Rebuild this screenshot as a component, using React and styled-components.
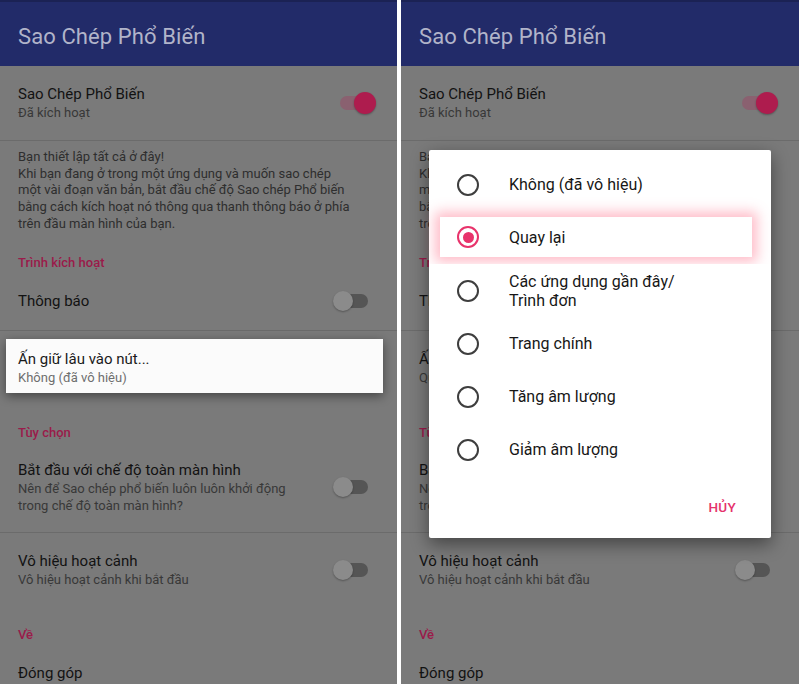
import React from "react";
import styled, { createGlobalStyle } from "styled-components";

// ===== GLOBAL =====
const GlobalStyle = createGlobalStyle`
    body {
        margin: 0;
        background: #ffffff;
        font-family: Roboto, "Noto Sans", "Liberation Sans", sans-serif;
    }
`;

// ===== STYLED COMPONENTS =====
const Stage = styled.div`
    display: flex;
    gap: 4px;
    width: 799px;
    height: 684px;
    overflow: hidden;
    background: #ffffff;
`;

const Screen = styled.div`
    position: relative;
    flex: 0 0 ${props => props.$width}px;
    display: flex;
    flex-direction: column;
    background: #7a7a7a;
    overflow: hidden;
`;

const AppBar = styled.div`
    flex: 0 0 66px;
    display: flex;
    align-items: center;
    padding: 4px 18px 0;
    box-sizing: border-box;
    background: #222b69;
    border-top: 2px solid #1b2254;
`;

const AppTitle = styled.div`
    font-size: 22px;
    color: #b1b4c9;
    letter-spacing: 0.1px;
`;

const Row = styled.div`
    display: flex;
    align-items: center;
    gap: 18px;
    padding: ${props => props.$pt}px 22px ${props => props.$pb}px 18px;
    border-bottom: ${props => props.$divider ? "1px solid #6b6b6b" : "none"};
`;

const RowText = styled.div`
    flex: 1;
    min-width: 0;
`;

const RowTitle = styled.div`
    font-size: 15px;
    line-height: 20px;
    color: #121212;
`;

const RowSummary = styled.div`
    font-size: 13px;
    line-height: 17px;
    color: #383838;
`;

const Note = styled.p`
    margin: 0;
    padding: 8px 18px 8.5px;
    font-size: 13px;
    line-height: 16.7px;
    color: #2e2e2e;
    white-space: nowrap;
`;

const SectionTitle = styled.div`
    padding: ${props => props.$pt}px 18px 0;
    font-size: 13px;
    line-height: 16px;
    font-weight: 500;
    color: #9a1b4a;
`;

const PressSlot = styled.div`
    position: relative;
    z-index: 2;
    padding: 8px 14px 13px 6px;
`;

const PressCard = styled.div`
    padding: 10px 12px 7px;
    background: ${props => props.$raised ? "#fbfbfb" : "transparent"};
    box-shadow: ${props => props.$raised ? "0 3px 10px rgba(0, 0, 0, 0.45)" : "none"};
`;

const RaisedTitle = styled(RowTitle)`
    color: ${props => props.$raised ? "#1a1a1a" : "#121212"};
`;

const RaisedSummary = styled(RowSummary)`
    color: ${props => props.$raised ? "#6e6e6e" : "#383838"};
`;

const SwitchBox = styled.div`
    position: relative;
    flex: 0 0 38px;
    height: 22px;
`;

const SwitchTrack = styled.div`
    position: absolute;
    left: 3px;
    right: ${props => props.$on ? 3 : 7}px;
    top: 4px;
    height: 14px;
    border-radius: 7px;
    background: ${props => props.$on ? "#8a6170" : "#555555"};
`;

const SwitchThumb = styled.div`
    position: absolute;
    top: ${props => props.$on ? 0 : 1}px;
    ${props => props.$on ? "right: -1px;" : "left: -4px;"}
    width: ${props => props.$on ? 22 : 20}px;
    height: ${props => props.$on ? 22 : 20}px;
    border-radius: 50%;
    background: ${props => props.$on ? "#ae1c4e" : "#8b8b8b"};
    box-shadow: 0 1px 2px rgba(0, 0, 0, 0.3);
`;

const DialogLayer = styled.div`
    position: absolute;
    inset: 0;
    z-index: 3;
    display: flex;
    align-items: center;
    justify-content: center;
    padding-top: 4px;
`;

const Dialog = styled.div`
    width: 342px;
    padding-top: 8px;
    background: #ffffff;
    border-radius: 2px;
    box-shadow: 0 6px 18px rgba(0, 0, 0, 0.45);
`;

const Option = styled.div`
    display: flex;
    align-items: center;
    gap: 30px;
    min-height: ${props => props.$active ? 40 : 53}px;
    margin: ${props => props.$active ? "6px 19px 7px 11px" : "0"};
    padding-left: ${props => props.$active ? 17 : 28}px;
    background: #ffffff;
    box-shadow: ${props => props.$active ? "0 0 12px 5px rgba(255, 95, 125, 0.42)" : "none"};
`;

const Radio = styled.div`
    flex: 0 0 auto;
    display: flex;
    align-items: center;
    justify-content: center;
    width: 22px;
    height: 22px;
    box-sizing: border-box;
    border-radius: 50%;
    border: 2px solid ${props => props.$checked ? "#e8336b" : "#3e3e3e"};

    &::after {
        content: "";
        display: ${props => props.$checked ? "block" : "none"};
        width: 11px;
        height: 11px;
        border-radius: 50%;
        background: #e8336b;
    }
`;

const OptionLabel = styled.div`
    font-size: 16px;
    line-height: 19px;
    color: #171717;
`;

const Actions = styled.div`
    height: 62px;
    display: flex;
    align-items: center;
    justify-content: flex-end;
    padding-right: 35px;
`;

const CancelButton = styled.button`
    border: none;
    background: none;
    padding: 0;
    font-family: inherit;
    font-size: 13.5px;
    font-weight: 500;
    color: #e5336c;
    letter-spacing: 0.3px;
`;

// ===== SMALL COMPONENTS =====
function Switch({ on }) {
    return (
        <SwitchBox>
            <SwitchTrack $on={on} />
            <SwitchThumb $on={on} />
        </SwitchBox>
    );
}

const OPTIONS = [
    { label: "Không (đã vô hiệu)" },
    { label: "Quay lại", checked: true },
    { label: <>Các ứng dụng gần đây/<br />Trình đơn</> },
    { label: "Trang chính" },
    { label: "Tăng âm lượng" },
    { label: "Giảm âm lượng" },
];

function ButtonDialog() {
    return (
        <DialogLayer>
            <Dialog>
                {OPTIONS.map((o, i) => (
                    <Option key={i} $active={o.checked}>
                        <Radio $checked={o.checked} />
                        <OptionLabel>{o.label}</OptionLabel>
                    </Option>
                ))}
                <Actions>
                    <CancelButton>HỦY</CancelButton>
                </Actions>
            </Dialog>
        </DialogLayer>
    );
}

// ===== SETTINGS SCREEN =====
function SettingsScreen({ width, raised, pressSummary, children }) {
    return (
        <Screen $width={width}>
            <AppBar>
                <AppTitle>Sao Chép Phổ Biến</AppTitle>
            </AppBar>

            <Row $pt={18} $pb={19} $divider>
                <RowText>
                    <RowTitle>Sao Chép Phổ Biến</RowTitle>
                    <RowSummary>Đã kích hoạt</RowSummary>
                </RowText>
                <Switch on />
            </Row>

            <Note>
                Bạn thiết lập tất cả ở đây!<br />
                Khi bạn đang ở trong một ứng dụng và muốn sao chép<br />
                một vài đoạn văn bản, bắt đầu chế độ Sao chép Phổ biến<br />
                bằng cách kích hoạt nó thông qua thanh thông báo ở phía<br />
                trên đầu màn hình của bạn.
            </Note>

            <SectionTitle $pt={14}>Trình kích hoạt</SectionTitle>
            <Row $pt={19} $pb={18} $divider>
                <RowText>
                    <RowTitle>Thông báo</RowTitle>
                </RowText>
                <Switch />
            </Row>

            <PressSlot>
                <PressCard $raised={raised}>
                    <RaisedTitle $raised={raised}>Ấn giữ lâu vào nút...</RaisedTitle>
                    <RaisedSummary $raised={raised}>{pressSummary}</RaisedSummary>
                </PressCard>
            </PressSlot>

            <SectionTitle $pt={19}>Tùy chọn</SectionTitle>
            <Row $pt={19} $pb={18} $divider>
                <RowText>
                    <RowTitle>Bắt đầu với chế độ toàn màn hình</RowTitle>
                    <RowSummary>
                        Nên để Sao chép phổ biến luôn luôn khởi động<br />
                        trong chế độ toàn màn hình?
                    </RowSummary>
                </RowText>
                <Switch />
            </Row>
            <Row $pt={18} $pb={17}>
                <RowText>
                    <RowTitle>Vô hiệu hoạt cảnh</RowTitle>
                    <RowSummary>Vô hiệu hoạt cảnh khi bắt đầu</RowSummary>
                </RowText>
                <Switch />
            </Row>

            <SectionTitle $pt={22}>Về</SectionTitle>
            <Row $pt={20} $pb={0}>
                <RowText>
                    <RowTitle>Đóng góp</RowTitle>
                </RowText>
            </Row>

            {children}
        </Screen>
    );
}

// ===== MAIN COMPONENT =====
export default function App() {
    return (
        <>
            <GlobalStyle />
            <Stage>
                <SettingsScreen width={397} raised pressSummary="Không (đã vô hiệu)" />
                <SettingsScreen width={398} pressSummary="Quay lại">
                    <ButtonDialog />
                </SettingsScreen>
            </Stage>
        </>
    );
}
